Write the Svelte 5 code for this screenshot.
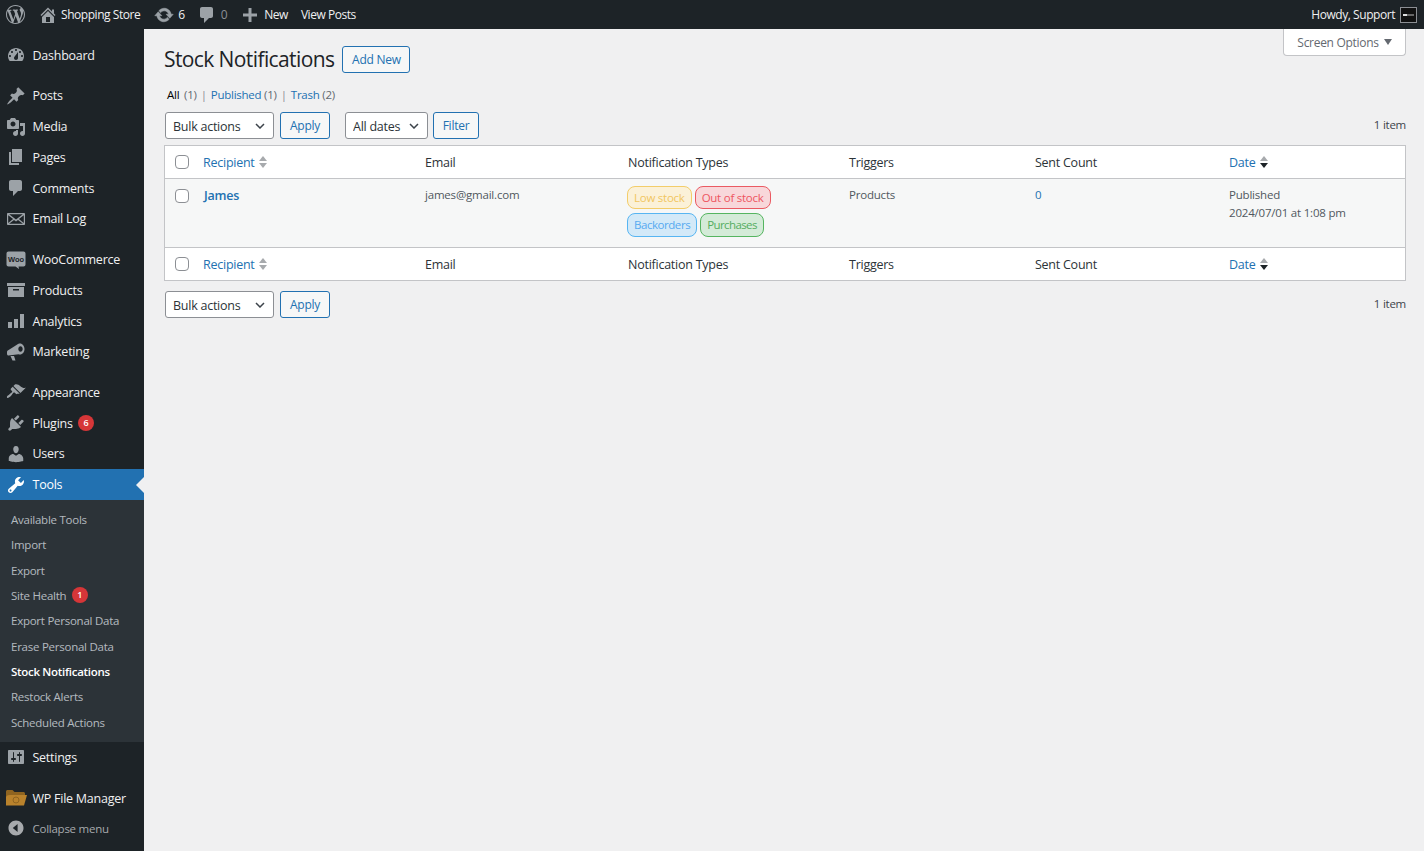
<script>
  const icons = {
    dashboard: 'M3.76 16h12.48c1.1-1.37 1.76-3.11 1.76-5 0-4.42-3.58-8-8-8s-8 3.58-8 8c0 1.89.66 3.63 1.76 5zM10 4c.55 0 1 .45 1 1s-.45 1-1 1-1-.45-1-1 .45-1 1-1zM6 6c.55 0 1 .45 1 1s-.45 1-1 1-1-.45-1-1 .45-1 1-1zm8 0c.55 0 1 .45 1 1s-.45 1-1 1-1-.45-1-1 .45-1 1-1zm-5.37 5.55L12 7v6c0 1.1-.9 2-2 2s-2-.9-2-2c0-.57.24-1.08.63-1.45zM4 10c.55 0 1 .45 1 1s-.45 1-1 1-1-.45-1-1 .45-1 1-1zm12 0c.55 0 1 .45 1 1s-.45 1-1 1-1-.45-1-1 .45-1 1-1z',
    pin: 'M10.44 3.02l1.82-1.82 6.36 6.35-1.83 1.82c-1.05-.68-2.48-.57-3.41.36l-.75.75c-.92.93-1.04 2.35-.35 3.41l-1.83 1.82-2.41-2.41-2.8 2.79c-.42.42-3.38 2.71-3.8 2.29s1.86-3.39 2.28-3.81l2.79-2.79L4.1 9.36l1.83-1.82c1.05.69 2.48.57 3.4-.36l.75-.75c.93-.92 1.05-2.35.36-3.41z',
    media: 'M13 11V4c0-.55-.45-1-1-1h-1.67L9 1H5L3.67 3H2c-.55 0-1 .45-1 1v7c0 .55.45 1 1 1h10c.55 0 1-.45 1-1zM7 4.5c1.38 0 2.5 1.12 2.5 2.5S8.38 9.5 7 9.5 4.5 8.38 4.5 7 5.62 4.5 7 4.5zM14 6h5v10.5c0 1.38-1.12 2.5-2.5 2.5S14 17.88 14 16.5s1.12-2.5 2.5-2.5c.17 0 .34.02.5.05V9h-3V6zm-4 8.05V13h2v3.5c0 1.38-1.12 2.5-2.5 2.5S7 17.88 7 16.5 8.12 14 9.5 14c.17 0 .34.02.5.05z',
    pages: 'M6 15V2h10v13H6zm-1 1h8v2H3V5h2v11z',
    comments: 'M5 2h9c1.1 0 2 .9 2 2v7c0 1.1-.9 2-2 2h-2l-5 5v-5H5c-1.1 0-2-.9-2-2V4c0-1.1.9-2 2-2z',
    email: 'M2 4h16c.55 0 1 .45 1 1v10c0 .55-.45 1-1 1H2c-.55 0-1-.45-1-1V5c0-.55.45-1 1-1zm1.2 1.2L10 10.6l6.800-5.400zM2.200 6.200v7.900l4.900-4zm15.600 0l-4.900 3.900 4.900 4zM3.100 14.800h13.800l-4.900-3.900-2 1.600-2-1.600z',
    products: 'M19 3v3H1V3h18zM2 7h16v10H2V7zm5 2v1.500h6V9H7z',
    analytics: 'M2 11h4v6H2zM8 8h4v9H8zM14 3h4v14h-4z',
    marketing: 'M14 1.500c2.500 0 4.500 2.500 4.500 5.500s-2 5.500-4.500 5.500c-.500 0-1-.100-1.500-.300L2.500 13.500c-.800 0-1.500-.700-1.500-1.500v-2c0-.700.300-1.200.800-1.500L10.500 3c.800-.900 2.200-1.500 3.500-1.500zM14.500 4.300c-1.200 0-2.200 1.200-2.200 2.700s1 2.700 2.200 2.700 2.200-1.200 2.200-2.700-1-2.700-2.200-2.700zM4.500 14h3.500l1.500 4.500h-3z',
    appearance: 'M14.480 11.060L7.410 3.990l1.500-1.500c.500-.560 2.300-.470 3.510.320 1.210.800 1.430 1.280 2.910 2.100 1.180.640 2.450 1.260 4.450.850zm-.710.710L6.700 4.700 4.930 6.470c-.390.390-.390 1.020 0 1.410l1.060 1.060c.390.390.390 1.030 0 1.420-.600.600-1.430 1.110-2.210 1.690-.350.260-.700.530-1.010.840C1.430 13.230.400 14.950 1.100 15.660c.710.700 2.430-.330 3.760-1.660.310-.310.580-.660.850-1.010.570-.780 1.080-1.610 1.690-2.210.390-.390 1.020-.390 1.410 0l1.060 1.060c.390.390 1.020.390 1.410 0z',
    plugins: 'M13.110 4.360L9.870 7.600 8 5.730l3.240-3.240c.350-.340 1.050-.200 1.560.320.520.510.660 1.210.310 1.550zm-8 1.770l.910-1.120 9.010 9.010-1.190.840c-.710.710-2.630 1.160-3.820 1.160H6.140L4.900 17.260c-.590.590-1.540.590-2.120 0-.590-.580-.590-1.530 0-2.120l1.240-1.240v-3.880c0-1.130.400-3.190 1.090-3.890zm7.260 3.970l3.240-3.240c.340-.350 1.040-.210 1.550.31.520.510.660 1.210.31 1.550l-3.240 3.250z',
    users: 'M10 9.250c-2.270 0-2.730-3.440-2.730-3.440C7 4.020 7.820 2 9.970 2c2.160 0 2.980 2.020 2.710 3.810 0 0-.410 3.440-2.680 3.440zm0 2.570L12.720 10c2.390 0 4.520 2.330 4.520 4.530v2.490s-3.650 1.130-7.240 1.130c-3.650 0-7.240-1.130-7.240-1.130v-2.490c0-2.250 1.940-4.480 4.470-4.480z',
    tools: 'M16.680 9.770c-1.340 1.340-3.300 1.670-4.950.990l-5.410 6.520c-.990.990-2.590.990-3.580 0s-.990-2.590 0-3.570l6.520-5.420c-.680-1.650-.350-3.610.990-4.950 1.280-1.280 3.120-1.620 4.720-1.060l-2.890 2.890 2.820 2.820 2.860-2.870c.530 1.580.180 3.390-1.080 4.650zM3.810 16.210c.400.390 1.040.390 1.430 0 .400-.400.400-1.040 0-1.430-.390-.400-1.030-.400-1.430 0-.390.390-.390 1.030 0 1.430z',
    settings: 'M18 16V4c0-.550-.450-1-1-1H3c-.550 0-1 .450-1 1v12c0 .550.450 1 1 1h14c.550 0 1-.450 1-1zM8 11h1c.550 0 1 .450 1 1s-.450 1-1 1H8v1.500c0 .280-.220.500-.500.500s-.500-.220-.500-.500V13H6c-.550 0-1-.450-1-1s.450-1 1-1h1V5.500c0-.280.220-.500.500-.500s.500.220.500.500V11zm5-2h-1c-.550 0-1-.450-1-1s.450-1 1-1h1V5.500c0-.280.220-.500.500-.500s.500.220.500.500V7h1c.550 0 1 .450 1 1s-.450 1-1 1h-1v5.500c0 .280-.220.500-.500.500s-.500-.220-.500-.500V9z',
    collapse: 'M10 .6C4.800.6.600 4.800.600 10s4.200 9.400 9.400 9.400 9.400-4.200 9.400-9.400S15.200.6 10 .6zm2 14.400L6 10l6-5v10z',
    wp: 'M20 10c0-5.510-4.490-10-10-10C4.480 0 0 4.490 0 10c0 5.520 4.480 10 10 10 5.510 0 10-4.480 10-10zM7.780 15.370L4.370 6.220c.550-.020 1.170-.080 1.170-.080.500-.060.440-1.130-.060-1.110 0 0-1.450.110-2.370.110-.180 0-.370 0-.580-.010C4.120 2.690 6.890 1.050 10 1.050c2.330 0 4.450.870 6.050 2.340-.680-.110-1.650.390-1.650 1.580 0 .740.450 1.370.900 2.110.350.610.550 1.370.550 2.470 0 1.490-1.400 5-1.400 5l-3.030-8.370c.540-.020.820-.170.820-.170.500-.050.440-1.250-.060-1.220 0 0-1.440.120-2.380.120-.870 0-2.330-.120-2.330-.120-.500-.030-.560 1.200-.060 1.220l.920.080 1.260 3.410zM17.410 10c.240-.640.740-1.870.430-4.250.700 1.290 1.050 2.710 1.050 4.250 0 3.290-1.730 6.240-4.400 7.780.970-2.590 1.940-5.200 2.920-7.780zM6.100 18.090C3.120 16.650 1.060 13.570 1.060 10c0-1.310.230-2.510.700-3.630 1.450 3.910 2.900 7.820 4.340 11.720zm4.030-6.630l2.580 6.980c-.860.280-1.770.440-2.710.440-.800 0-1.550-.100-2.280-.320.820-2.380 1.640-4.740 2.410-7.100z',
    home: 'M16 8.500l1.530 1.530-1.060 1.060L10 4.620l-6.470 6.470-1.060-1.060L10 2.500l4 4v-2h2v4zm-6-2.460l6 5.990V18H4v-5.970zM12 17v-5H8v5h4z',
    update: 'M10.200 3.280c3.530 0 6.430 2.610 6.920 6h2.080l-3.500 4-3.500-4h2.320c-.450-1.970-2.210-3.450-4.320-3.450-1.450 0-2.730.710-3.540 1.780L4.950 5.660C6.230 4.200 8.110 3.280 10.200 3.280zm-.400 13.440c-3.520 0-6.430-2.610-6.920-6H.800l3.500-4c1.170 1.330 2.330 2.670 3.500 4H5.480c.450 1.970 2.210 3.450 4.320 3.450 1.450 0 2.730-.710 3.540-1.780l1.710 1.950c-1.280 1.460-3.150 2.380-5.250 2.380z',
    plus: 'M17 8.500v3h-5.500V17h-3v-5.500H3v-3h5.500V3h3v5.500z',
  };

  const evenodd = ['email', 'marketing'];

  const groups = [
    [{ label: 'Dashboard', icon: 'dashboard' }],
    [
      { label: 'Posts', icon: 'pin' },
      { label: 'Media', icon: 'media' },
      { label: 'Pages', icon: 'pages' },
      { label: 'Comments', icon: 'comments' },
      { label: 'Email Log', icon: 'email' },
    ],
    [
      { label: 'WooCommerce', icon: 'woo' },
      { label: 'Products', icon: 'products' },
      { label: 'Analytics', icon: 'analytics' },
      { label: 'Marketing', icon: 'marketing' },
    ],
    [
      { label: 'Appearance', icon: 'appearance' },
      { label: 'Plugins', icon: 'plugins', badge: 6 },
      { label: 'Users', icon: 'users' },
      { label: 'Tools', icon: 'tools', current: true },
      { label: 'Settings', icon: 'settings' },
    ],
    [{ label: 'WP File Manager', icon: 'folder' }],
  ];

  const submenu = [
    { label: 'Available Tools' },
    { label: 'Import' },
    { label: 'Export' },
    { label: 'Site Health', badge: 1 },
    { label: 'Export Personal Data' },
    { label: 'Erase Personal Data' },
    { label: 'Stock Notifications', current: true },
    { label: 'Restock Alerts' },
    { label: 'Scheduled Actions' },
  ];

  const tags = [
    { label: 'Low stock', kind: 'low' },
    { label: 'Out of stock', kind: 'out' },
    { label: 'Backorders', kind: 'back' },
    { label: 'Purchases', kind: 'buy' },
  ];
</script>

{#snippet dash(name, size = 20)}
  <svg class="dash" width={size} height={size} viewBox="0 0 20 20" aria-hidden="true"><path d={icons[name]} fill-rule={evenodd.includes(name) ? 'evenodd' : undefined} /></svg>
{/snippet}

{#snippet sorter(active)}
  <span class="sorter" class:active aria-hidden="true"><i class="up"></i><i class="down"></i></span>
{/snippet}

{#snippet headRow()}
  <tr>
    <th class="col-check"><input type="checkbox" class="check" /></th>
    <th class="col-name"><a class="sort-link" href="#r">Recipient {@render sorter(false)}</a></th>
    <th class="col-email">Email</th>
    <th class="col-types">Notification Types</th>
    <th class="col-triggers">Triggers</th>
    <th class="col-sent">Sent Count</th>
    <th class="col-date"><a class="sort-link" href="#d">Date {@render sorter(true)}</a></th>
  </tr>
{/snippet}

<div class="admin">
  <header class="topbar">
    <div class="bar-left">
      <span class="bar-item logo">{@render dash('wp', 19)}</span>
      <span class="bar-item site">{@render dash('home', 20)}<span>Shopping Store</span></span>
      <span class="bar-item updates">{@render dash('update', 20)}<span>6</span></span>
      <span class="bar-item notes">{@render dash('comments', 20)}<span class="dim">0</span></span>
      <span class="bar-item add">{@render dash('plus', 20)}<span>New</span></span>
      <span class="bar-item">View Posts</span>
    </div>
    <div class="bar-right">
      <span>Howdy, Support</span>
      <span class="avatar"><i></i></span>
    </div>
  </header>

  <div class="body">
    <nav class="sidebar">
      {#each groups as group}
        <ul class="menu">
          {#each group as item}
            <li class="menu-item" class:current={item.current}>
              <span class="menu-icon">
                {#if item.icon === 'woo'}
                  <svg width="20" height="20" viewBox="0 0 20 20" aria-hidden="true">
                    <path class="woo-shape" d="M2.500 1.500h15c1.100 0 2 .9 2 2v11c0 1.100-.9 2-2 2h-5l.5 2.500-3.500-2.500h-7c-1.100 0-2-.9-2-2v-11c0-1.100.9-2 2-2z" />
                    <text class="woo-text" x="10" y="11.500" text-anchor="middle">Woo</text>
                  </svg>
                {:else if item.icon === 'folder'}
                  <svg width="22" height="18" viewBox="0 0 22 18" aria-hidden="true">
                    <path fill="#8f6420" d="M1 2.500C1 1.700 1.700 1 2.500 1h5l2 2h9c.8 0 1.500.7 1.500 1.500V8H1z" />
                    <path fill="#b9822c" d="M4.500 6H22l-3 10.500H1L1 8c.4-1.200 2-2 3.500-2z" />
                    <circle cx="11" cy="11" r="3" fill="none" stroke="#8f6420" stroke-width="1" />
                  </svg>
                {:else}
                  {@render dash(item.icon)}
                {/if}
              </span>
              <span class="menu-label">{item.label}</span>
              {#if item.badge}<span class="badge">{item.badge}</span>{/if}
            </li>
            {#if item.current}
              <ul class="submenu">
                {#each submenu as sub}
                  <li class="sub-item" class:current={sub.current}>
                    {sub.label}
                    {#if sub.badge}<span class="badge">{sub.badge}</span>{/if}
                  </li>
                {/each}
              </ul>
            {/if}
          {/each}
        </ul>
      {/each}
      <div class="collapse">
        <span class="menu-icon">{@render dash('collapse', 16)}</span>
        <span>Collapse menu</span>
      </div>
    </nav>

    <main class="content">
      <button type="button" class="screen-options">Screen Options <i></i></button>

      <div class="title-row">
        <h1>Stock Notifications</h1>
        <a class="btn add-new" href="#new">Add New</a>
      </div>

      <ul class="views">
        <li><a class="on" href="#all">All</a> <span>(1)</span></li>
        <li class="sep">|</li>
        <li><a href="#pub">Published</a> <span>(1)</span></li>
        <li class="sep">|</li>
        <li><a href="#trash">Trash</a> <span>(2)</span></li>
      </ul>

      <div class="tablenav top">
        <select class="select bulk"><option>Bulk actions</option></select>
        <button type="button" class="btn apply">Apply</button>
        <select class="select dates"><option>All dates</option></select>
        <button type="button" class="btn filter">Filter</button>
        <span class="count">1 item</span>
      </div>

      <table class="list">
        <thead>{@render headRow()}</thead>
        <tbody>
          <tr class="row">
            <td class="cell-check"><input type="checkbox" class="check" /></td>
            <td class="cell-name"><a href="#james">James</a></td>
            <td>james@gmail.com</td>
            <td class="cell-types">
              <div class="tags">
                {#each tags as tag}
                  <span class="tag {tag.kind}">{tag.label}</span>
                {/each}
              </div>
            </td>
            <td>Products</td>
            <td class="cell-sent"><a href="#sent">0</a></td>
            <td>Published<br />2024/07/01 at 1:08 pm</td>
          </tr>
        </tbody>
        <tfoot>{@render headRow()}</tfoot>
      </table>

      <div class="tablenav bottom">
        <select class="select bulk"><option>Bulk actions</option></select>
        <button type="button" class="btn apply">Apply</button>
        <span class="count">1 item</span>
      </div>
    </main>
  </div>
</div>

<style>
  :global(body) {
    margin: 0;
    background: #f0f0f1;
  }

  .admin {
    height: 851px;
    display: flex;
    flex-direction: column;
    overflow: hidden;
    font-family: "Open Sans", "Noto Sans", sans-serif;
    font-size: 12.5px;
    letter-spacing: -0.25px;
    color: #3c434a;
  }

  a {
    color: #2271b1;
    text-decoration: none;
  }

  ul {
    list-style: none;
    margin: 0;
    padding: 0;
  }

  /* admin bar */
  .topbar {
    height: 29px;
    flex-shrink: 0;
    background: #1d2327;
    color: #f0f0f1;
    font-size: 12px;
    letter-spacing: -0.45px;
    display: flex;
    justify-content: space-between;
    align-items: center;
    padding: 0 7px 0 6px;
  }

  .bar-left {
    display: flex;
    align-items: center;
  }

  .bar-item {
    display: flex;
    align-items: center;
    gap: 4px;
    margin-right: 13px;
  }

  .bar-item .dash {
    fill: #9ca2a7;
  }

  .updates .dash {
    stroke: #9ca2a7;
    stroke-width: 0.6;
  }

  .logo {
    margin-right: 13px;
  }

  .site {
    gap: 3px;
    margin-right: 14px;
  }

  .updates {
    margin-right: 12px;
  }

  .dim {
    color: #8c8f94;
  }

  .bar-right {
    display: flex;
    align-items: center;
    gap: 5px;
  }

  .avatar {
    width: 15px;
    height: 14px;
    border: 1px solid #8c8f94;
    background: #111;
    display: flex;
    align-items: center;
    justify-content: center;
  }

  .avatar i {
    width: 11px;
    height: 2px;
    background: linear-gradient(90deg, #ddd 40%, #666 40%);
  }

  .body {
    flex: 1;
    display: flex;
    min-height: 0;
  }

  /* sidebar */
  .sidebar {
    width: 144px;
    flex-shrink: 0;
    background: #1d2327;
    color: #f0f0f1;
    padding-top: 11px;
  }

  .menu {
    margin-bottom: 9.850px;
  }

  .menu:last-of-type {
    margin-bottom: 0;
  }

  .menu-item {
    height: 30.750px;
    display: flex;
    align-items: center;
    position: relative;
  }

  .menu-item.current {
    background: #2271b1;
    color: #fff;
  }

  .menu-item.current::after {
    content: "";
    position: absolute;
    right: 0;
    top: 50%;
    margin-top: -8px;
    border: 8px solid transparent;
    border-right-color: #f0f0f1;
    border-left-width: 0;
  }

  .menu-icon {
    width: 32.500px;
    flex-shrink: 0;
    display: flex;
    justify-content: center;
    padding-right: 1.500px;
    box-sizing: border-box;
  }

  .menu-icon .dash {
    fill: #9ca2a7;
  }

  .current .menu-icon .dash {
    fill: #fff;
  }

  .woo-shape {
    fill: #9ca2a7;
  }

  .woo-text {
    font-family: "Liberation Sans", sans-serif;
    font-size: 7.500px;
    font-weight: 700;
    fill: #1d2327;
    letter-spacing: 0;
  }

  .badge {
    width: 16px;
    height: 16px;
    margin-left: 5.500px;
    border-radius: 50%;
    background: #d63638;
    color: #fff;
    font-size: 9px;
    font-weight: 600;
    line-height: 16px;
    text-align: center;
    letter-spacing: 0;
    display: inline-block;
  }

  .submenu {
    background: #2c3338;
    padding: 6.500px 0 7px;
  }

  .sub-item {
    height: 25.400px;
    display: flex;
    align-items: center;
    padding-left: 11px;
    font-size: 11.500px;
    color: rgba(240, 246, 252, 0.7);
  }

  .sub-item.current {
    color: #fff;
    font-weight: 600;
    letter-spacing: -0.3px;
  }

  .collapse {
    height: 30px;
    display: flex;
    align-items: center;
    color: #a7aaad;
    font-size: 11.500px;
  }

  .collapse .dash {
    fill: #a7aaad;
  }

  /* main */
  .content {
    flex: 1;
    min-width: 0;
    padding: 0 18px 0 21px;
    position: relative;
  }

  .screen-options {
    position: absolute;
    top: 0;
    right: 18px;
    width: 123px;
    height: 27px;
    box-sizing: border-box;
    background: #fff;
    border: 1px solid #c3c4c7;
    border-top: none;
    border-radius: 0 0 4px 4px;
    color: #646970;
    font: inherit;
    font-size: 12px;
    letter-spacing: -0.3px;
    display: flex;
    align-items: center;
    justify-content: center;
    gap: 5px;
  }

  .screen-options i {
    border: 4.500px solid transparent;
    border-top: 6px solid #646970;
    border-bottom-width: 0;
  }

  .title-row {
    display: flex;
    align-items: center;
    gap: 8px;
    height: 60px;
    margin-left: -1px;
  }

  h1 {
    margin: 0 0 1px;
    font-size: 21px;
    font-weight: 400;
    color: #1d2327;
    letter-spacing: -0.6px;
  }

  .btn {
    box-sizing: border-box;
    height: 27px;
    display: inline-flex;
    align-items: center;
    justify-content: center;
    border: 1px solid #2271b1;
    border-radius: 3px;
    background: #f6f7f7;
    color: #2271b1;
    font: inherit;
    font-size: 12px;
    letter-spacing: inherit;
    padding: 0;
  }

  .add-new {
    width: 68px;
  }

  .views {
    display: flex;
    align-items: center;
    gap: 4px;
    margin-top: -4px;
    height: 18px;
    margin-left: 2px;
    font-size: 11.500px;
    color: #646970;
  }

  .views .on {
    color: #000;
    margin-right: 2px;
  }

  .views .sep {
    color: #8c8f94;
  }

  .tablenav {
    display: flex;
    align-items: center;
    height: 27px;
  }

  .top {
    margin-top: 9px;
  }

  .bottom {
    margin-top: 10px;
  }

  .select {
    box-sizing: border-box;
    height: 27px;
    border: 1px solid #8c8f94;
    border-radius: 3px;
    padding: 1px 20px 0 7px;
    background: #fff url('data:image/svg+xml;utf8,<svg xmlns="http://www.w3.org/2000/svg" width="10" height="6" viewBox="0 0 10 6"><path d="M1 1l4 4 4-4" fill="none" stroke="%233c434a" stroke-width="1.500"/></svg>') no-repeat right 8px center;
    appearance: none;
    font: inherit;
    letter-spacing: inherit;
    color: #2c3338;
  }

  .bulk {
    width: 109px;
  }

  .dates {
    width: 83px;
    margin-left: 15px;
  }

  .apply {
    width: 50px;
    margin-left: 6px;
  }

  .filter {
    width: 46px;
    margin-left: 5px;
  }

  .count {
    margin-left: auto;
    margin-bottom: 2px;
    color: #3c434a;
    font-size: 11.500px;
  }

  .list {
    width: 1242px;
    margin-top: 6px;
    margin-left: -1px;
    table-layout: fixed;
    border-collapse: separate;
    border-spacing: 0;
    background: #fff;
    border: 1px solid #c3c4c7;
    box-sizing: border-box;
  }

  th {
    height: 33px;
    padding: 0 0 0 10px;
    text-align: left;
    font-weight: 400;
    color: #2c3338;
    box-sizing: border-box;
  }

  thead th {
    border-bottom: 1px solid #c3c4c7;
  }

  tfoot th {
    border-top: 1px solid #c3c4c7;
  }

  .col-check {
    width: 28px;
    padding-left: 10px;
  }

  .col-name {
    width: 222px;
  }

  .col-email {
    width: 203px;
  }

  .col-types {
    width: 221px;
  }

  .col-triggers {
    width: 186px;
  }

  .col-sent {
    width: 194px;
  }

  .check {
    appearance: none;
    width: 14px;
    height: 14px;
    margin: 0;
    display: block;
    background: #fff;
    border: 1px solid #8c8f94;
    border-radius: 4px;
  }

  .sort-link {
    display: inline-flex;
    align-items: center;
    gap: 4px;
  }

  .sorter {
    display: inline-flex;
    flex-direction: column;
    gap: 2px;
  }

  .sorter i {
    width: 0;
    height: 0;
    border: 4px solid transparent;
    border-top-width: 0;
    border-bottom: 5.500px solid #a7aaad;
  }

  .sorter .down {
    border-bottom-width: 0;
    border-top: 5.500px solid #a7aaad;
  }

  .sorter.active .down {
    border-top-color: #1d2327;
  }

  .row td {
    background: #f6f7f7;
    vertical-align: top;
    padding: 7px 10px 0;
    height: 68px;
    box-sizing: border-box;
    font-size: 11.500px;
    letter-spacing: -0.2px;
    line-height: 18px;
    color: #50575e;
  }

  .row .cell-check {
    padding: 10px 0 0 10px;
  }

  .row .cell-name {
    padding-left: 11px;
    padding-top: 8px;
    font-size: 12.500px;
    font-weight: 600;
    line-height: 18px;
  }

  .row .cell-types {
    padding-left: 9px;
  }

  .tags {
    display: flex;
    flex-wrap: wrap;
    gap: 4px;
    width: 160px;
  }

  .tag {
    box-sizing: border-box;
    height: 23px;
    display: inline-flex;
    align-items: center;
    padding: 0 6px;
    border: 1px solid;
    border-radius: 8px;
    line-height: 1;
    letter-spacing: -0.25px;
  }

  .low {
    background: #fbf1d8;
    border-color: #f3cd6a;
    color: #f1c660;
  }

  .out {
    background: #f8d7da;
    border-color: #ea5a62;
    color: #ee5560;
    margin-left: -1px;
  }

  .back {
    height: 24px;
    background: #d3e9f8;
    border-color: #57b5f2;
    color: #57aaf0;
    letter-spacing: -0.45px;
    margin-right: -1px;
  }

  .buy {
    height: 24px;
    background: #d4ebd8;
    border-color: #55b560;
    color: #55ad60;
    letter-spacing: -0.6px;
  }
</style>
